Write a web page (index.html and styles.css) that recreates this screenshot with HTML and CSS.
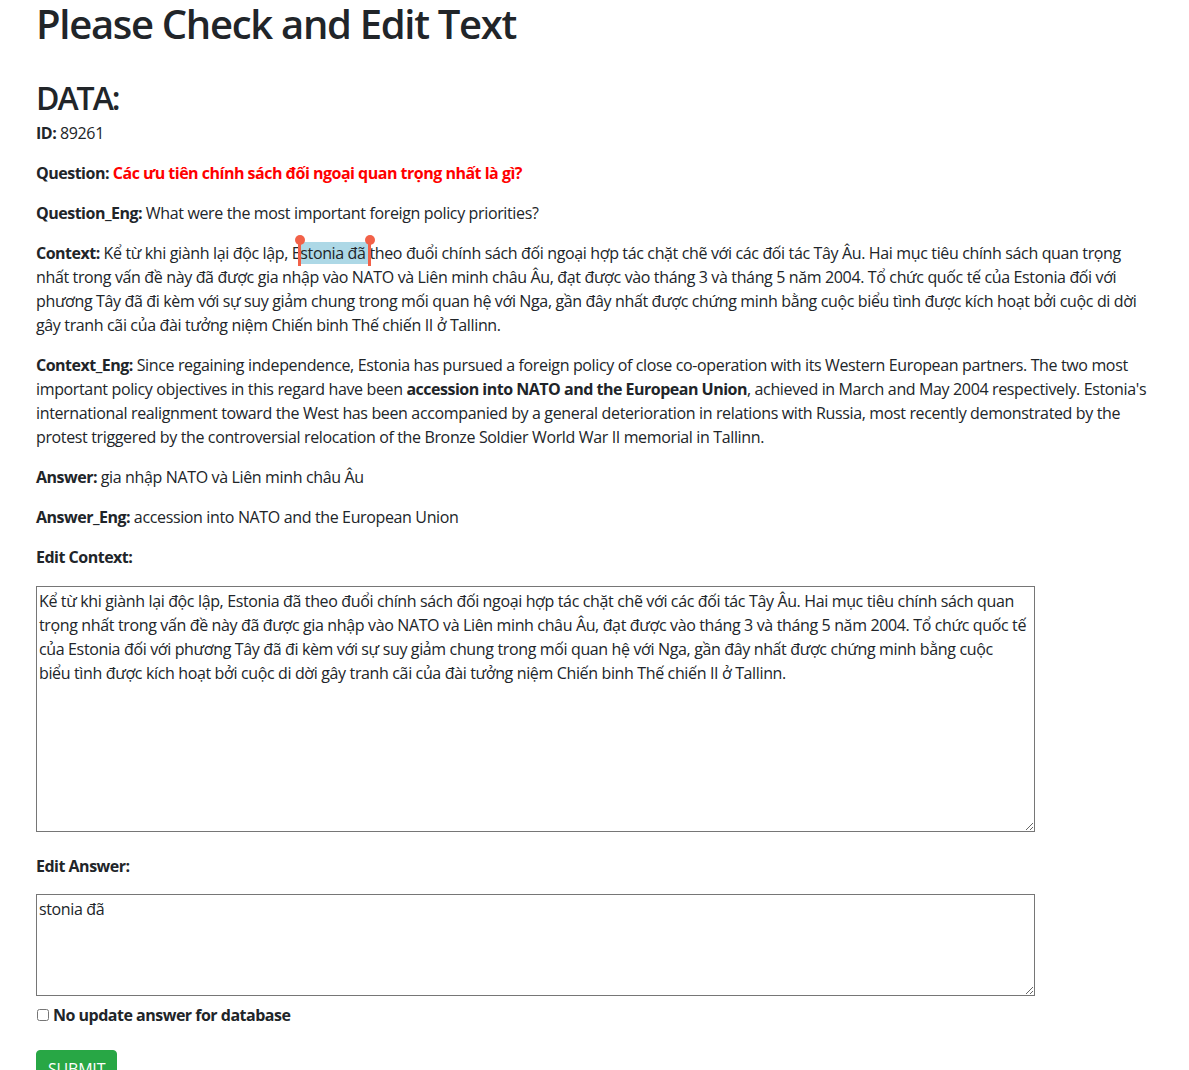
FILE: index.html
```html
<!DOCTYPE html>
<html lang="vi">
<head>
<meta charset="utf-8">
<title>Please Check and Edit Text</title>
<link rel="stylesheet" href="styles.css">
</head>
<body>
<div class="container">
  <h1 class="title">Please Check and Edit Text</h1>
  <h2 class="section">DATA:</h2>
  <p><b>ID:</b> 89261</p>
  <p><b>Question:</b> <b class="red">Các ưu tiên chính sách đối ngoại quan trọng nhất là gì?</b></p>
  <p><b>Question_Eng:</b> What were the most important foreign policy priorities?</p>
  <p><b>Context:</b> Kể từ khi giành lại độc lập, E<span class="sel"><span class="handle handle-l"></span>stonia đã <span class="handle handle-r"></span></span>theo đuổi chính sách đối ngoại hợp tác chặt chẽ với các đối tác Tây Âu. Hai mục tiêu chính sách quan trọng nhất trong vấn đề này đã được gia nhập vào NATO và Liên minh châu Âu, đạt được vào tháng 3 và tháng 5 năm 2004. Tổ chức quốc tế của Estonia đối với phương Tây đã đi kèm với sự suy giảm chung trong mối quan hệ với Nga, gần đây nhất được chứng minh bằng cuộc biểu tình được kích hoạt bởi cuộc di dời gây tranh cãi của đài tưởng niệm Chiến binh Thế chiến II ở Tallinn.</p>
  <p><b>Context_Eng:</b> Since regaining independence, Estonia has pursued a foreign policy of close co-operation with its Western European partners. The two most important policy objectives in this regard have been <b>accession into NATO and the European Union</b>, achieved in March and May 2004 respectively. Estonia's international realignment toward the West has been accompanied by a general deterioration in relations with Russia, most recently demonstrated by the protest triggered by the controversial relocation of the Bronze Soldier World War II memorial in Tallinn.</p>
  <p><b>Answer:</b> gia nhập NATO và Liên minh châu Âu</p>
  <p><b>Answer_Eng:</b> accession into NATO and the European Union</p>
  <p class="label1"><b>Edit Context:</b></p>
  <textarea class="box box-context">Kể từ khi giành lại độc lập, Estonia đã theo đuổi chính sách đối ngoại hợp tác chặt chẽ với các đối tác Tây Âu. Hai mục tiêu chính sách quan trọng nhất trong vấn đề này đã được gia nhập vào NATO và Liên minh châu Âu, đạt được vào tháng 3 và tháng 5 năm 2004. Tổ chức quốc tế của Estonia đối với phương Tây đã đi kèm với sự suy giảm chung trong mối quan hệ với Nga, gần đây nhất được chứng minh bằng cuộc biểu tình được kích hoạt bởi cuộc di dời gây tranh cãi của đài tưởng niệm Chiến binh Thế chiến II ở Tallinn.</textarea>
  <p class="label2"><b>Edit Answer:</b></p>
  <textarea class="box box-answer">stonia đã</textarea>
  <div class="check"><input type="checkbox" id="noupd"><label for="noupd">No update answer for database</label></div>
  <button class="btn-submit" type="button">SUBMIT</button>
</div>
</body>
</html>
```
FILE: styles.css
```css
html, body {
  margin: 0;
  padding: 0;
  background: #fff;
}
body {
  font-family: "Open Sans", "Noto Sans", sans-serif;
  font-size: 16px;
  line-height: 24px;
  letter-spacing: -0.36px;
  color: #212529;
}
.container {
  width: 1113px;
  padding-left: 36px;
}
.title {
  font-size: 40px;
  font-weight: 600;
  line-height: 48px;
  letter-spacing: -1.3px;
  margin: 0;
}
.section {
  font-size: 32px;
  font-weight: 600;
  line-height: 38px;
  letter-spacing: -2px;
  margin: 31px 0 4px;
}
p {
  margin: 0 0 16px;
}
b {
  font-weight: 700;
  letter-spacing: -0.5px;
}
.red {
  color: #ff0000;
}
.sel {
  position: relative;
  background: #add8e6;
}
.handle {
  position: absolute;
  top: -5px;
  width: 3px;
  height: 29px;
  background: #f26148;
}
.handle::before {
  content: "";
  position: absolute;
  top: -2px;
  left: -3.5px;
  width: 10px;
  height: 10px;
  border-radius: 50%;
  background: #f26148;
}
.handle-l { left: -2px; }
.handle-r { right: -2px; }
.box {
  display: inline-block;
  box-sizing: border-box;
  width: 999px;
  margin: 0;
  padding: 2px 7px 2px 2px;
  border: 1px solid #767676;
  font-family: inherit;
  font-size: 16px;
  line-height: 24px;
  letter-spacing: -0.36px;
  color: #212529;
  vertical-align: baseline;
  resize: both;
}
.label1 { margin-bottom: 17px; }
.box-context { height: 246px; }
.box-answer { height: 102px; }
.label2 { margin-top: 16px; }
.check {
  display: flex;
  align-items: center;
  height: 24px;
  margin-top: 1px;
  font-weight: 700;
  letter-spacing: -0.5px;
}
.check input {
  margin: 0 4px 0 1px;
  width: 12px;
  height: 12px;
}
.btn-submit {
  margin-top: 23px;
  background: #28a745;
  color: #fff;
  border: 1px solid #28a745;
  border-radius: 4px;
  font-family: inherit;
  font-size: 16px;
  line-height: 24px;
  letter-spacing: -0.2px;
  padding: 6px 11px;
}
```
